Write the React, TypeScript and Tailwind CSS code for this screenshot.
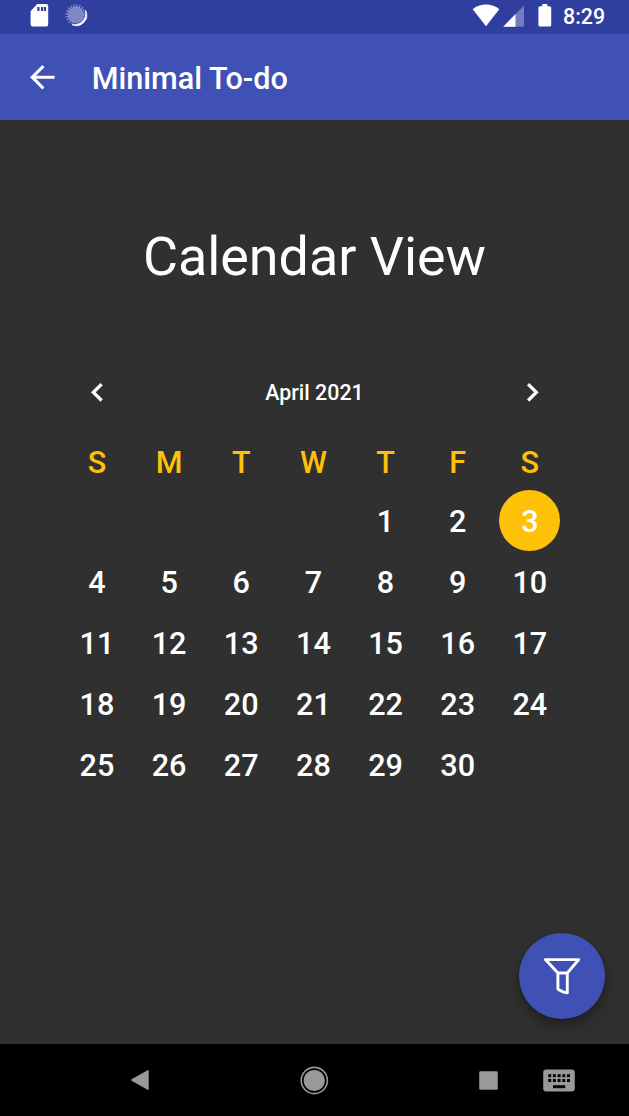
import React from "react";

const WEEKDAYS = ["S", "M", "T", "W", "T", "F", "S"];
const FIRST_WEEKDAY = 4;
const DAYS_IN_MONTH = 30;
const TODAY = 3;

function StatusBar() {
  return (
    <div className="flex h-[34px] shrink-0 items-start bg-[#303f9f] text-white">
      <svg className="ml-[30px] mt-[3px]" width="19" height="24" viewBox="0 0 19 24">
        <path
          fill="currentColor"
          fillRule="evenodd"
          d="M7.2 1H16.2a2 2 0 0 1 2 2V21.500a2 2 0 0 1-2 2H2.600a2 2 0 0 1-2-2V8.200ZM7.300 4v4h2.200V4ZM11 4v4h2.200V4ZM14 4v4h2V4Z"
        />
      </svg>
      <svg className="ml-[15px] mt-[3px]" width="25" height="25" viewBox="0 0 25 25">
        <path d="M21.500 7.500A10.300 10.300 0 0 1 8 21.600 11.500 11.500 0 0 0 21.500 7.500Z" fill="#fff" stroke="#fff" strokeWidth=".8" />
        <circle cx="11.800" cy="11.800" r="8" fill="#fff" fillOpacity=".38" />
        <circle cx="11.800" cy="11.800" r="9" fill="none" stroke="#fff" strokeOpacity=".35" strokeWidth="3" strokeDasharray="1.600 1.227" />
      </svg>
      <svg className="ml-[383px] mt-[3px]" width="28" height="24" viewBox="0 0 28 24">
        <path fill="currentColor" d="M14 23.200.700 6.200C4.500 3.100 9 1.600 14 1.600s9.500 1.500 13.300 4.600Z" />
      </svg>
      <svg className="ml-[3px] mt-[5px]" width="22" height="22" viewBox="0 0 22 22">
        <path fill="#fff" fillOpacity=".32" d="M.5 21.800 21 .500V21.800Z" />
        <path fill="#fff" d="M.2 21.800 12.500 9V21.800Z" />
      </svg>
      <svg className="ml-[13px] mt-[3px]" width="14" height="24" viewBox="0 0 14 24">
        <path fill="currentColor" d="M4.300 1H9.300V3.200H11.700a1.500 1.500 0 0 1 1.500 1.500V22.100a1.500 1.500 0 0 1-1.500 1.500H1.900a1.500 1.500 0 0 1-1.500-1.500V4.700A1.500 1.500 0 0 1 1.900 3.200H4.300Z" />
      </svg>
      <span className="ml-[11px] mt-px text-[21.400px] font-medium leading-[31px]">8:29</span>
    </div>
  );
}

function AppBar() {
  return (
    <header className="flex h-[85.600px] shrink-0 items-center bg-[#3f51b5] text-white">
      <button aria-label="Back" className="ml-6 mt-px">
        <svg width="36.700" height="36.700" viewBox="0 0 24 24" fill="currentColor">
          <path d="M20 11H7.830l5.590-5.590L12 4l-8 8 8 8 1.410-1.410L7.830 13H20v-2z" />
        </svg>
      </button>
      <h1 className="ml-[31px] mt-[4px] text-[30.600px] font-medium leading-9">Minimal To-do</h1>
    </header>
  );
}

function MonthHeader() {
  return (
    <div className="mt-[79px] flex h-[50px] w-[507px] items-center justify-between">
      <button aria-label="Previous month" className="flex w-[72px] justify-center">
        <svg width="36.700" height="36.700" viewBox="0 0 24 24" fill="currentColor" stroke="currentColor" strokeWidth=".25">
          <path d="M15.410 7.410 14 6l-6 6 6 6 1.410-1.410L10.830 12z" />
        </svg>
      </button>
      <span className="text-[21.400px] font-medium leading-6">April 2021</span>
      <button aria-label="Next month" className="flex w-[72px] justify-center">
        <svg width="36.700" height="36.700" viewBox="0 0 24 24" fill="currentColor" stroke="currentColor" strokeWidth=".25">
          <path d="M10 6 8.590 7.410 13.170 12l-4.580 4.590L10 18l6-6z" />
        </svg>
      </button>
    </div>
  );
}

function Calendar() {
  const blanks = Array.from({ length: FIRST_WEEKDAY });
  const days = Array.from({ length: DAYS_IN_MONTH }, (_, i) => i + 1);
  return (
    <div className="mr-[2.200px] w-[505px] text-[30.600px] font-medium">
      <div className="mt-[25px] grid h-[47.300px] grid-cols-7 text-center leading-[40px] text-[#ffc107]">
        {WEEKDAYS.map((d, i) => (
          <span key={i}>{d}</span>
        ))}
      </div>
      <div className="grid auto-rows-[61.200px] grid-cols-7 place-items-center">
        {blanks.map((_, i) => (
          <span key={"b" + i} />
        ))}
        {days.map((d) => (
          <span
            key={d}
            className={
              d === TODAY
                ? "flex size-[61.200px] items-center justify-center rounded-full bg-[#ffc107] pt-[2px]"
                : "flex size-[61.200px] items-center justify-center pt-[2px]"
            }
          >
            {d}
          </span>
        ))}
      </div>
    </div>
  );
}

function NavigationBar() {
  return (
    <nav className="flex h-[72px] shrink-0 items-center bg-black text-[#999999]">
      <svg className="ml-[130px]" width="20" height="22" viewBox="0 0 20 22">
        <path fill="currentColor" d="M1.500 10.200 17.700 1.200q1-.5 1 .7V20.100q0 1.200-1 .7L1.500 11.800q-1.200-.8 0-1.600Z" />
      </svg>
      <svg className="ml-[150px]" width="29" height="29" viewBox="0 0 29 29">
        <circle cx="14.300" cy="14.500" r="10.600" fill="currentColor" />
        <circle cx="14.300" cy="14.500" r="13.100" fill="none" stroke="currentColor" strokeWidth="1.600" />
      </svg>
      <svg className="ml-[150px]" width="19" height="19" viewBox="0 0 19 19">
        <rect x=".2" y=".2" width="18.600" height="18.600" rx="1.200" fill="currentColor" />
      </svg>
      <svg className="ml-[45px]" width="32" height="23" viewBox="0 0 32 23">
        <rect x=".2" y=".4" width="31.600" height="22.200" rx="3" fill="currentColor" />
        {[5.200, 9.900, 14.600, 19.300, 24].map((x) => (
          <g key={x} fill="#000">
            <rect x={x} y="5.200" width="3" height="3" />
            <rect x={x} y="10" width="3" height="3" />
          </g>
        ))}
        <rect x="10" y="16.200" width="12.200" height="3" fill="#000" />
      </svg>
    </nav>
  );
}

export default function App() {
  return (
    <div className="flex h-[1116px] w-[629px] flex-col overflow-hidden bg-[#303030] font-[Roboto,sans-serif] text-white">
      <StatusBar />
      <AppBar />
      <main className="relative flex min-h-0 flex-1 flex-col items-center">
        <h2 className="mt-[105px] text-[53.800px] leading-[64px]">Calendar View</h2>
        <MonthHeader />
        <Calendar />
        <button
          aria-label="Filter"
          className="absolute bottom-[25px] right-6 flex size-[86px] items-center justify-center rounded-full bg-[#3f51b5] shadow-[0_8px_14px_rgba(0,0,0,0.28),0_2px_4px_rgba(0,0,0,0.15)]"
        >
          <svg width="38" height="38" viewBox="0 0 38 38" fill="none" stroke="currentColor" strokeWidth="2.900" strokeLinejoin="round" strokeLinecap="round">
            <path d="M2.400 2.600H35.700L24.300 16V35.900L20.800 35.200 15.600 32.600Q14.900 32.200 14.900 31.400V16ZM14.900 16H24.300" />
          </svg>
        </button>
      </main>
      <NavigationBar />
    </div>
  );
}
